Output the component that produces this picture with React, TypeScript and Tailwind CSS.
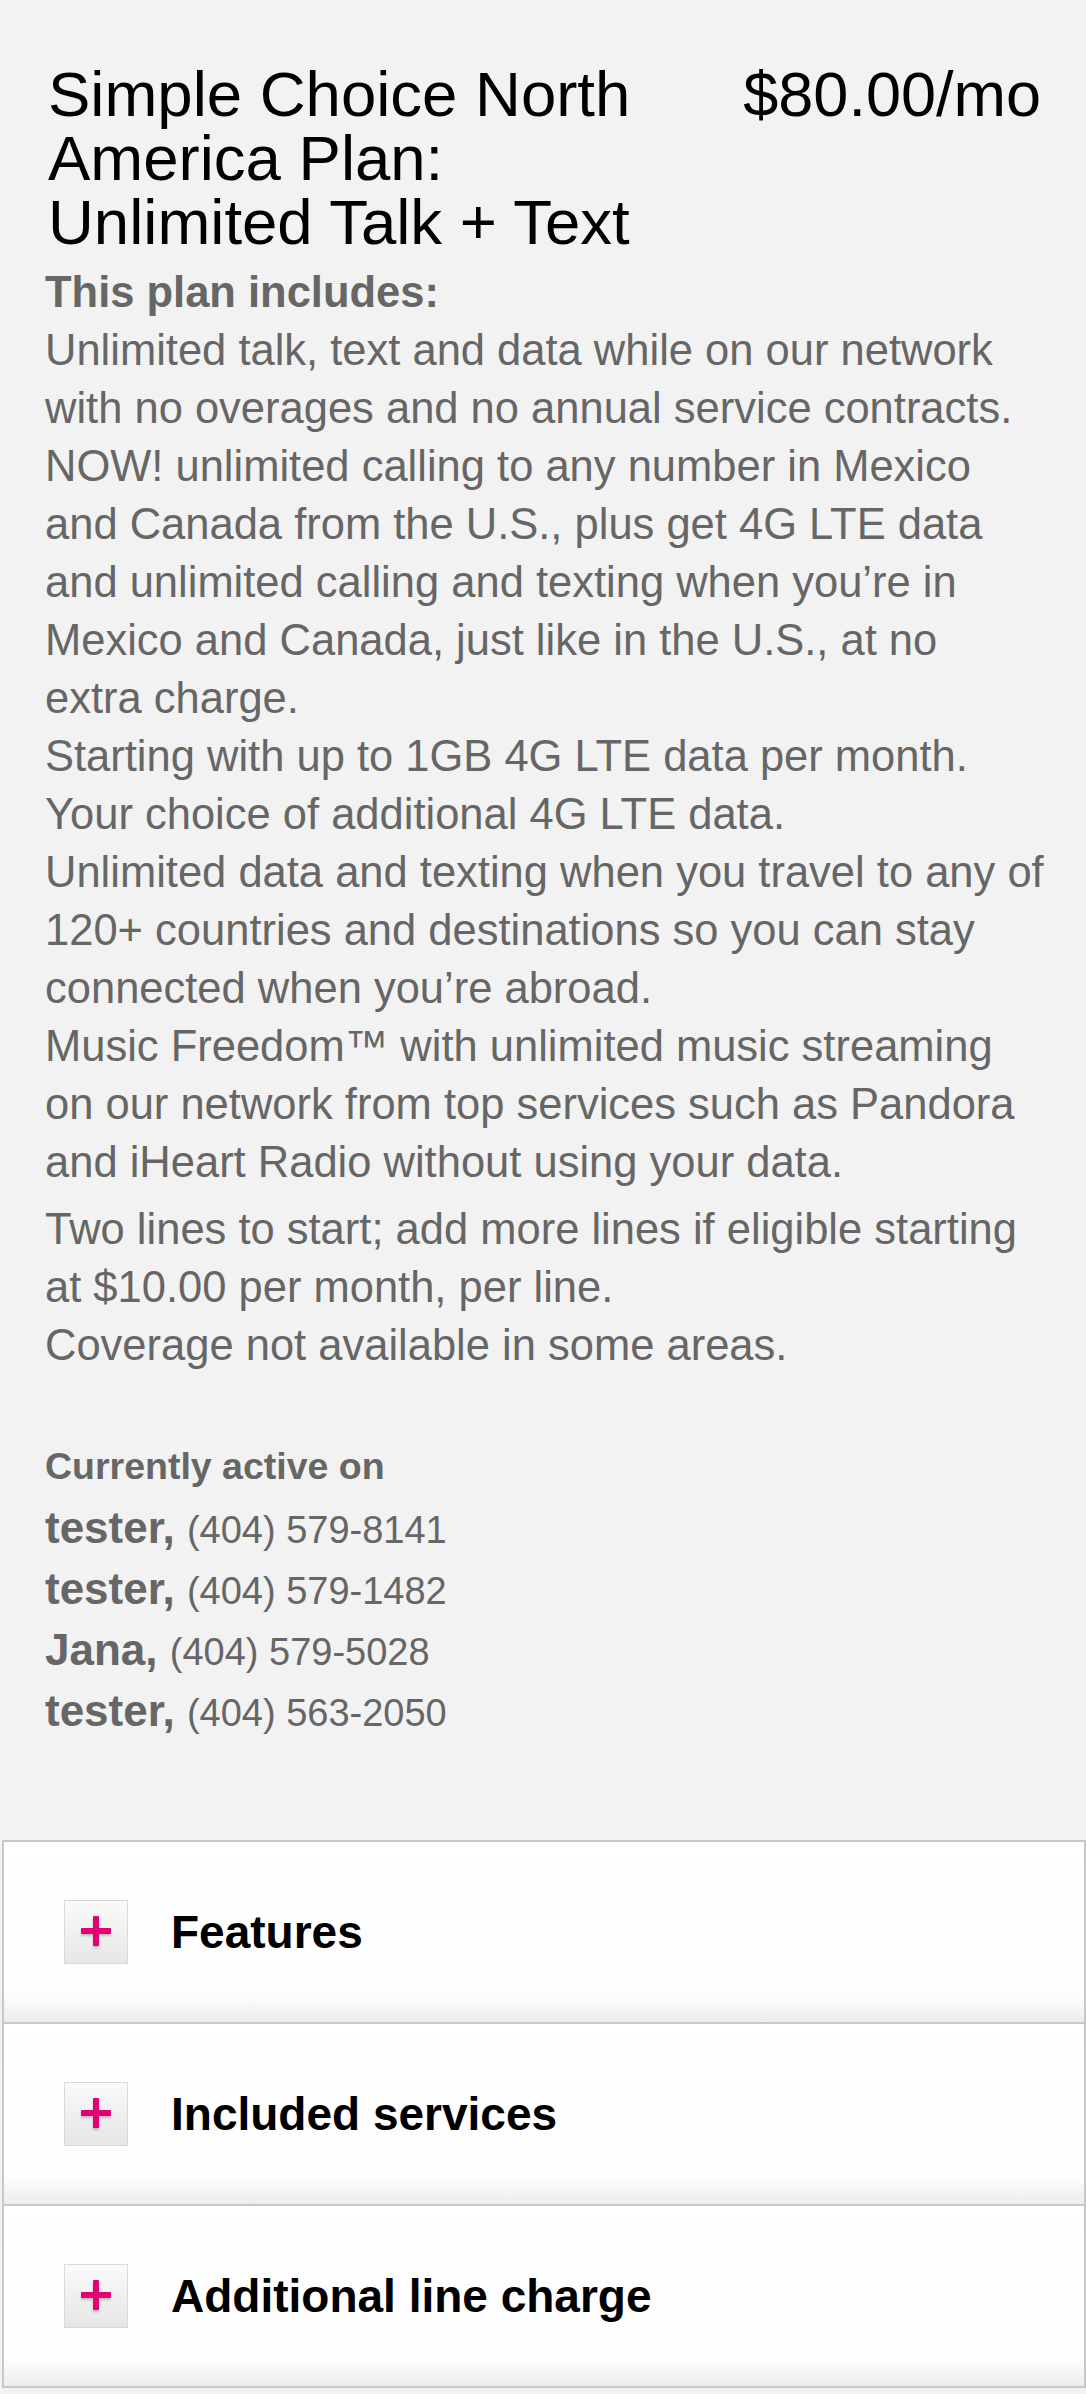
import React from 'react';

const planLines: string[][] = [
  [
    'Unlimited talk, text and data while on our network',
    'with no overages and no annual service contracts.',
    'NOW! unlimited calling to any number in Mexico',
    'and Canada from the U.S., plus get 4G LTE data',
    'and unlimited calling and texting when you\u2019re in',
    'Mexico and Canada, just like in the U.S., at no',
    'extra charge.',
  ],
  ['Starting with up to 1GB 4G LTE data per month.'],
  ['Your choice of additional 4G LTE data.'],
  [
    'Unlimited data and texting when you travel to any of',
    '120+ countries and destinations so you can stay',
    'connected when you\u2019re abroad.',
  ],
  [
    'Music Freedom\u2122 with unlimited music streaming',
    'on our network from top services such as Pandora',
    'and iHeart Radio without using your data.',
  ],
];

const lines = [
  { name: 'tester', phone: '(404) 579-8141' },
  { name: 'tester', phone: '(404) 579-1482' },
  { name: 'Jana', phone: '(404) 579-5028' },
  { name: 'tester', phone: '(404) 563-2050' },
];

const sections = ['Features', 'Included services', 'Additional line charge'];

function PlusBox() {
  return (
    <div className="flex h-[64px] w-[64px] shrink-0 items-center justify-center border border-[#d9d9d9] bg-[linear-gradient(to_bottom,#fafafa,#e6e6e6)]">
      <svg width="32" height="34" viewBox="0 0 32 34" className="drop-shadow-[0_2px_1px_rgba(0,0,0,0.22)]">
        <rect x="13" y="1" width="6" height="30" rx="1" fill="#e20074" />
        <rect x="1" y="13" width="30" height="6" rx="1" fill="#e20074" />
      </svg>
    </div>
  );
}

function AccordionRow({ title }: { title: string }) {
  return (
    <div className="flex h-[182px] items-center border-b-2 border-[#c8c8c8] bg-[linear-gradient(to_bottom,#ffffff_0%,#fdfdfd_86%,#ececec_100%)] pl-[60px]">
      <PlusBox />
      <span className="ml-[43px] text-[46px] font-bold leading-none text-black">{title}</span>
    </div>
  );
}

export default function App() {
  return (
    <div className="min-h-screen bg-[#f2f2f2] font-['Liberation_Sans',Arial,Helvetica,sans-serif]">
      <section className="pb-[99px] pl-[45px] pr-[40px] pt-[62px]">
        <div className="flex justify-between">
          <h1 className="whitespace-nowrap pl-[3px] text-[63.5px] font-normal leading-[64px] text-black">
            Simple Choice North
            <br />
            America Plan:
            <br />
            Unlimited Talk + Text
          </h1>
          <div className="pr-[5px] text-[63px] leading-[64px] text-black">$80.00/mo</div>
        </div>

        <div className="mt-[9px] whitespace-nowrap text-[43.5px] leading-[58px] text-[#666666]">
          <p className="font-bold">This plan includes:</p>
          {planLines.map((para, i) => (
            <p key={i}>
              {para.map((l, j) => (
                <React.Fragment key={j}>
                  {l}
                  {j < para.length - 1 && <br />}
                </React.Fragment>
              ))}
            </p>
          ))}
          <p className="mt-[9px]">
            Two lines to start; add more lines if eligible starting
            <br />
            at $10.00 per month, per line.
          </p>
          <p>Coverage not available in some areas.</p>
        </div>

        <div className="mt-[62px] text-[44px] leading-[61px] text-[#666666]">
          <p className="text-[37.5px] font-bold">Currently active on</p>
          {lines.map((l, i) => (
            <p key={i} className="whitespace-nowrap">
              <span className="font-bold">{l.name},</span>{' '}
              <span className="text-[38px] leading-[40px]">{l.phone}</span>
            </p>
          ))}
        </div>
      </section>

      <div className="ml-[2px] border-x-2 border-t-2 border-[#c8c8c8]">
        {sections.map((s) => (
          <AccordionRow key={s} title={s} />
        ))}
      </div>
    </div>
  );
}
